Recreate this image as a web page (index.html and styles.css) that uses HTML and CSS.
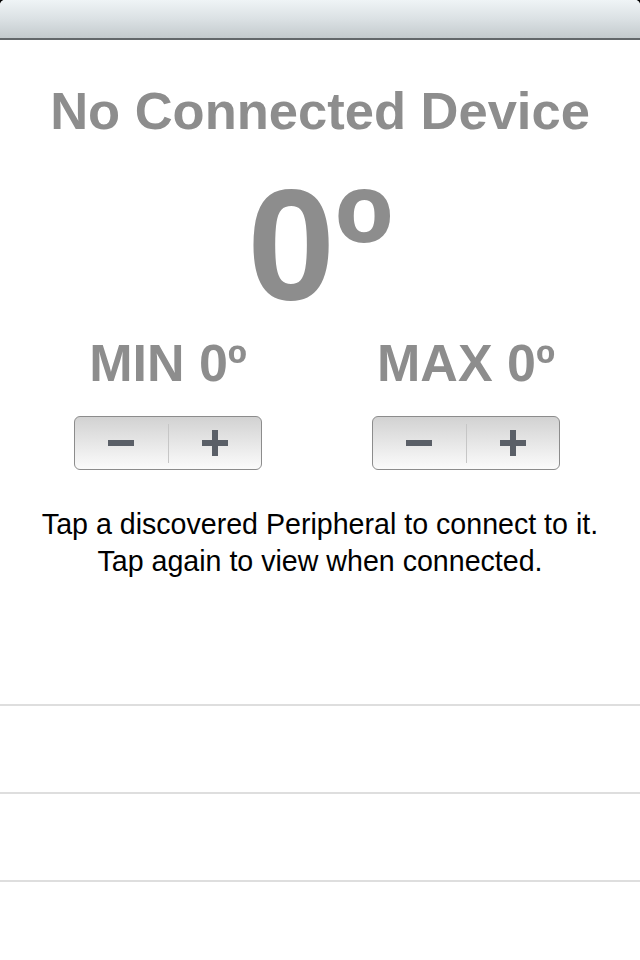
FILE: index.html
```html
<!DOCTYPE html>
<html lang="en">
<head>
<meta charset="utf-8">
<title>Thermometer</title>
<link rel="stylesheet" href="styles.css">
</head>
<body>
<div class="screen">
  <header class="navbar"></header>
  <main class="content">
    <h1 class="title">No Connected Device</h1>
    <div class="temp">0<span class="deg">º</span></div>
    <div class="limits">
      <div class="limit">
        <div class="limit-label">MIN 0º</div>
        <div class="stepper">
          <button class="step">
            <svg width="26" height="26" viewBox="0 0 26 26"><rect x="0" y="10" width="26" height="6" fill="#5a5f67"/></svg>
          </button>
          <span class="step-div"></span>
          <button class="step">
            <svg width="26" height="26" viewBox="0 0 26 26"><rect x="0" y="10" width="26" height="6" fill="#5a5f67"/><rect x="10" y="0" width="6" height="26" fill="#5a5f67"/></svg>
          </button>
        </div>
      </div>
      <div class="limit">
        <div class="limit-label">MAX 0º</div>
        <div class="stepper">
          <button class="step">
            <svg width="26" height="26" viewBox="0 0 26 26"><rect x="0" y="10" width="26" height="6" fill="#5a5f67"/></svg>
          </button>
          <span class="step-div"></span>
          <button class="step">
            <svg width="26" height="26" viewBox="0 0 26 26"><rect x="0" y="10" width="26" height="6" fill="#5a5f67"/><rect x="10" y="0" width="6" height="26" fill="#5a5f67"/></svg>
          </button>
        </div>
      </div>
    </div>
    <p class="hint">Tap a discovered Peripheral to connect to it.<br>Tap again to view when connected.</p>
  </main>
  <ul class="rows">
    <li class="row"></li>
    <li class="row"></li>
    <li class="row"></li>
  </ul>
</div>
</body>
</html>
```
FILE: styles.css
```css
html, body {
  margin: 0;
  padding: 0;
  background: #000;
}
.screen {
  width: 640px;
  height: 960px;
  background: #fff;
  border-radius: 5px 5px 0 0;
  overflow: hidden;
  font-family: "Liberation Sans", Arial, sans-serif;
}
.navbar {
  height: 38px;
  background: linear-gradient(#eff4f6, #dbe1e4 50%, #c3cacd);
  border-bottom: 2px solid #62676a;
  box-sizing: content-box;
}
.content {
  display: flex;
  flex-direction: column;
  align-items: center;
}
.title {
  margin: 45px 0 0;
  font-size: 52.5px;
  line-height: 52px;
  font-weight: bold;
  color: #8d8d8d;
}
.temp {
  margin-top: 27px;
  font-size: 158px;
  line-height: 160px;
  height: 160px;
  font-weight: bold;
  color: #8d8d8d;
}
.limits {
  display: grid;
  grid-template-columns: 296px 300px;
  box-sizing: border-box;
  width: 640px;
  padding: 0 24px 0 20px;
  margin-top: 13px;
}
.limit {
  display: flex;
  flex-direction: column;
  align-items: center;
}
.limit-label {
  font-size: 52px;
  line-height: 52px;
  font-weight: bold;
  color: #8d8d8d;
}
.stepper {
  margin-top: 27px;
  width: 188px;
  height: 54px;
  box-sizing: border-box;
  border: 1px solid #8c8c8c;
  border-radius: 6px;
  background: linear-gradient(#d2d2d2, #fbfbfb);
  display: flex;
  align-items: center;
}
.step {
  flex: 1;
  height: 100%;
  border: 0;
  padding: 0;
  background: transparent;
  display: flex;
  align-items: center;
  justify-content: center;
}
.step svg { display: block; }
.step-div {
  width: 1px;
  height: 39px;
  background: #c6c6c6;
}
.hint {
  margin: 36px 0 0;
  font-size: 28.6px;
  line-height: 37px;
  text-align: center;
  color: #000;
}
.rows {
  list-style: none;
  margin: 124px 0 0;
  padding: 0;
}
.row {
  height: 86px;
  border-top: 2px solid #dedede;
}
```
